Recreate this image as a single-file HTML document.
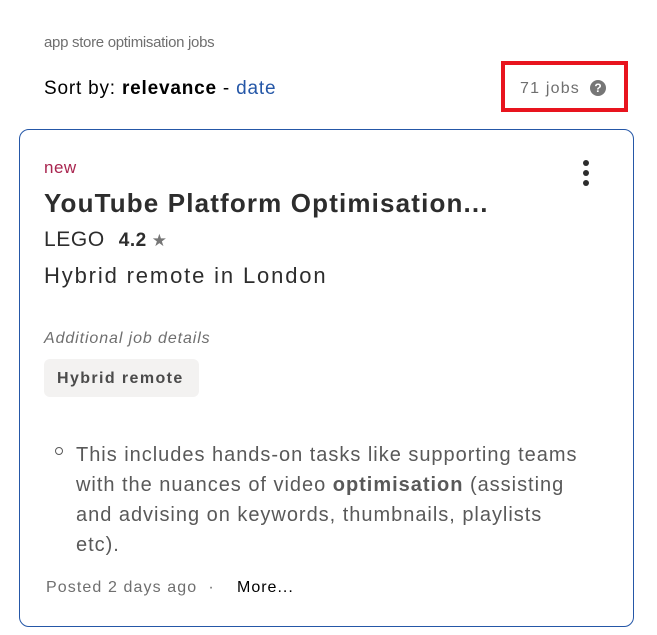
<!DOCTYPE html>
<html><head><meta charset="utf-8"><style>
body{margin:0;width:657px;height:635px;background:#fff;font-family:"Liberation Sans",sans-serif;position:relative;overflow:hidden;color:#2d2d2d}
.a{position:absolute;white-space:nowrap;line-height:1}
</style></head><body>
<div class="a" style="left:44px;top:35px;font-size:15px;color:#6f6f6f;letter-spacing:-0.3px">app store optimisation jobs</div>
<div class="a" style="left:44px;top:79px;font-size:19px;color:#000;letter-spacing:0.8px">Sort by: <b>relevance</b> - <span style="color:#2557a7">date</span></div>
<div class="a" style="left:501px;top:61px;width:119px;height:43px;border:4px solid #e8141e"></div>
<div class="a" style="left:520px;top:81px;font-size:16px;color:#6f6f6f;letter-spacing:1.2px">71 jobs</div>
<div class="a" style="left:590px;top:80px;width:16px;height:16px;border-radius:50%;background:#767676;color:#fff;font-size:12px;font-weight:bold;text-align:center;line-height:16px">?</div>
<div class="a" style="left:19px;top:129px;width:613px;height:496px;border:1px solid #2557a7;border-radius:10px"></div>
<div class="a" style="left:44px;top:159px;font-size:17px;color:#a9254f;letter-spacing:0.5px">new</div>
<div class="a" style="left:583px;top:160px;width:6px;height:6px;border-radius:50%;background:#2d2d2d;box-shadow:0 10px 0 #2d2d2d,0 20px 0 #2d2d2d"></div>
<div class="a" style="left:44px;top:190px;font-size:26px;font-weight:bold;letter-spacing:1.15px">YouTube Platform Optimisation...</div>
<div class="a" style="left:44px;top:229px;font-size:21px;letter-spacing:0.6px">LEGO<b style="font-size:19px;margin-left:14px;letter-spacing:0.5px">4.2</b><span style="color:#767676;font-size:17px;margin-left:5px">★</span></div>
<div class="a" style="left:44px;top:265px;font-size:22px;letter-spacing:1.85px">Hybrid remote in London</div>
<div class="a" style="left:44px;top:331px;font-size:16px;font-style:italic;color:#6f6f6f;letter-spacing:0.9px">Additional job details</div>
<div class="a" style="left:44px;top:359px;width:155px;height:38px;background:#f3f2f1;border-radius:6px"></div>
<div class="a" style="left:57px;top:371px;font-size:16px;font-weight:bold;color:#4b4b4b;letter-spacing:1.4px">Hybrid remote</div>
<div class="a" style="left:55px;top:447px;width:6px;height:6px;border:1.3px solid #595959;border-radius:50%"></div>
<div class="a" style="left:76px;top:440px;font-size:20px;line-height:30px;color:#595959;letter-spacing:0.98px">This includes hands-on tasks like supporting teams<br>with the nuances of video <b>optimisation</b> (assisting<br>and advising on keywords, thumbnails, playlists<br>etc).</div>
<div class="a" style="left:46px;top:580px;font-size:16px;color:#6f6f6f;letter-spacing:1.1px">Posted 2 days ago &nbsp;·</div>
<div class="a" style="left:237px;top:580px;font-size:16px;color:#000;letter-spacing:1px">More...</div>
</body></html>
